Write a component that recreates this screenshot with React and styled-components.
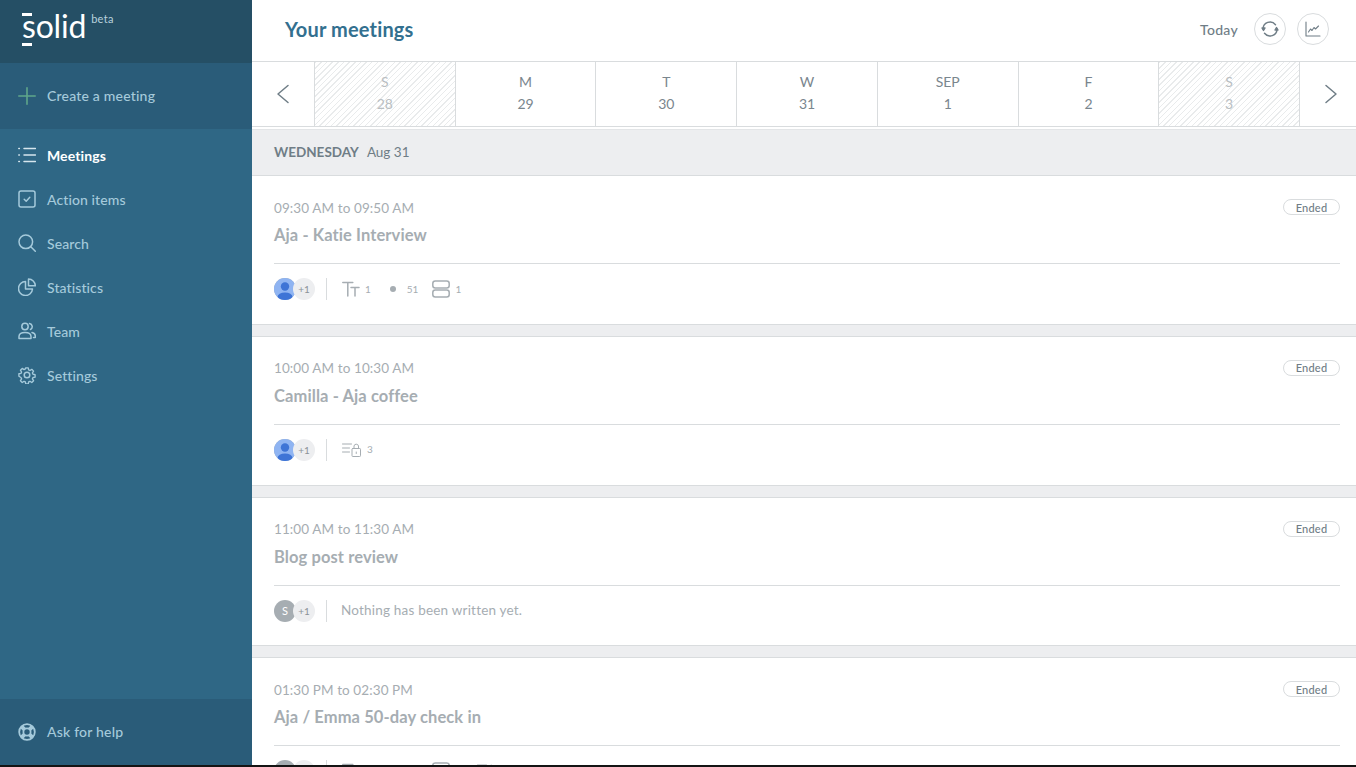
import React from "react";
import styled, { createGlobalStyle } from "styled-components";

const Global = createGlobalStyle`
  html, body { margin: 0; padding: 0; background: #141414; }
  * { box-sizing: border-box; }
  body { font-family: "Lato", "Open Sans", sans-serif; }
`;

const Frame = styled.div`
  display: flex;
  width: 1356px;
  height: 765px;
  overflow: hidden;
  background: #fff;
`;

const Sidebar = styled.aside`
  width: 252px;
  flex-shrink: 0;
  display: flex;
  flex-direction: column;
  background: #2f6785;
`;

const LogoBar = styled.div`
  height: 63px;
  background: #254f65;
  display: flex;
  align-items: flex-start;
  padding: 6px 0 0 22px;
  color: #fff;
`;

const LogoWord = styled.span`
  font-size: 32px;
  font-weight: 400;
  line-height: 40px;
  letter-spacing: -0.2px;
  position: relative;
  &::before, &::after {
    content: "";
    position: absolute;
    left: 0;
    width: 10px;
    height: 3px;
    background: #fff;
  }
  &::before { top: 7px; }
  &::after { top: 37px; }
`;

const Beta = styled.span`
  font-size: 11px;
  color: #b9d2de;
  margin: 6px 0 0 5px;
  letter-spacing: 0.3px;
`;

const CreateBar = styled.div`
  height: 66px;
  background: #2a5c79;
  display: flex;
  align-items: center;
  padding: 0 0 1px 18px;
  gap: 11px;
  color: #a5cadb;
  font-size: 14px;
  font-weight: 500;
  letter-spacing: 0.2px;
`;

const NavList = styled.nav`
  flex: 1;
  padding-top: 4px;
`;

const NavItem = styled.div`
  height: 44px;
  display: flex;
  align-items: center;
  padding-left: 18px;
  gap: 11px;
  font-size: 14px;
  letter-spacing: 0.1px;
  font-weight: ${({ $active }) => ($active ? 700 : 500)};
  color: ${({ $active }) => ($active ? "#fff" : "#a5cadb")};
`;

const Main = styled.main`
  flex: 1;
  min-width: 0;
  display: flex;
  flex-direction: column;
`;

const TopBar = styled.header`
  height: 62px;
  flex-shrink: 0;
  display: flex;
  align-items: center;
  padding: 0 27px 3px 33px;
  border-bottom: 1px solid #d9dcde;
`;

const PageTitle = styled.h1`
  margin: 0;
  flex: 1;
  font-size: 20px;
  font-weight: 700;
  letter-spacing: 0.15px;
  color: #33708f;
`;

const TodayLabel = styled.span`
  font-size: 14px;
  font-weight: 500;
  letter-spacing: 0.3px;
  color: #6f7d86;
  margin-right: 16px;
`;

const RoundButton = styled.button`
  width: 32px;
  height: 32px;
  border-radius: 50%;
  border: 1px solid #d9dcde;
  background: #fff;
  padding: 0;
  margin-left: 11px;
  display: flex;
  align-items: center;
  justify-content: center;
  &:first-of-type { margin-left: 0; }
`;

const Calendar = styled.div`
  height: 65px;
  flex-shrink: 0;
  display: flex;
  border-bottom: 1px solid #d9dcde;
`;

const Arrow = styled.div`
  width: ${({ $w }) => $w}px;
  flex-shrink: 0;
  display: flex;
  align-items: center;
  justify-content: center;
  padding-left: ${({ $shift }) => $shift ?? 0}px;
`;

const Day = styled.div`
  flex: 1;
  display: flex;
  flex-direction: column;
  align-items: center;
  padding-top: 12px;
  gap: 6px;
  font-size: 14px;
  line-height: 16px;
  border-left: 1px solid #d9dcde;
  &:nth-child(8) { border-right: 1px solid #d9dcde; }
  color: ${({ $off }) => ($off ? "#b9bec2" : "#7a868e")};
  background: ${({ $off }) =>
    $off
      ? "repeating-linear-gradient(135deg, #e9ebec 0 1px, #fff 1px 4px)"
      : "#fff"};
`;

const Agenda = styled.div`
  flex: 1;
  min-height: 0;
  margin-top: 2px;
  background: #edeef0;
  border-top: 1px solid #e3e5e7;
`;

const DayHeading = styled.div`
  height: 45px;
  display: flex;
  align-items: center;
  gap: 8px;
  padding: 0 0 1px 22px;
  font-size: 13.5px;
  color: #6f7d86;
  b { font-weight: 700; }
`;

const Card = styled.section`
  height: 149.75px;
  margin-bottom: 11px;
  padding: 0 16px 0 22px;
  background: #fff;
  border-top: 1px solid #d9dcde;
  border-bottom: 1px solid #d9dcde;
`;

const CardTop = styled.div`
  display: flex;
  justify-content: space-between;
  align-items: center;
  padding-top: 23px;
  height: 39px;
`;

const Time = styled.span`
  font-size: 13.5px;
  letter-spacing: 0.1px;
  margin-top: 1px;
  color: #a6adb2;
`;

const Ended = styled.span`
  width: 57px;
  height: 16px;
  border: 1px solid #d9dcde;
  border-radius: 8px;
  display: flex;
  align-items: center;
  justify-content: center;
  font-size: 11px;
  font-weight: 500;
  letter-spacing: 0.2px;
  color: #6f7d86;
`;

const MeetingTitle = styled.h2`
  margin: 0;
  height: 49px;
  padding-top: 9px;
  font-size: 16.5px;
  line-height: 22px;
  letter-spacing: 0.1px;
  font-weight: 700;
  color: #a6adb2;
  border-bottom: 1px solid #d9dcde;
`;

const Meta = styled.div`
  display: flex;
  align-items: center;
  height: 50px;
`;

const Avatars = styled.div`
  display: flex;
  padding-right: 11px;
  margin-right: 15px;
  width: 53px;
  position: relative;
  &::after {
    content: "";
    position: absolute;
    right: 0;
    top: 0;
    width: 1px;
    height: 22px;
    background: #d9dcde;
  }
`;

const Avatar = styled.span`
  width: 22px;
  height: 22px;
  flex-shrink: 0;
  border-radius: 50%;
  overflow: hidden;
  display: flex;
  align-items: center;
  justify-content: center;
  font-size: 11px;
  color: #fff;
  background: #a6adb2;
`;

const PlusOne = styled.span`
  width: 22px;
  height: 22px;
  flex-shrink: 0;
  margin-left: -3px;
  border-radius: 50%;
  display: flex;
  align-items: center;
  justify-content: center;
  font-size: 10px;
  color: #8b9399;
  background: #edeef0;
`;

const Stat = styled.span`
  display: flex;
  align-items: center;
  gap: ${({ $inner }) => $inner ?? 5}px;
  margin-right: ${({ $gap }) => $gap ?? 0}px;
  padding-bottom: 1px;
  font-size: 10px;
  color: #a6adb2;
`;

const Empty = styled.span`
  font-size: 13.5px;
  letter-spacing: 0.2px;
  margin-left: -1px;
  padding-bottom: 2px;
  color: #a6adb2;
`;

const Svg = ({ size = 20, h, color = "#a5cadb", sw = 1.5, children }) => (
  <svg width={size} height={h ?? size} viewBox={`0 0 ${size} ${h ?? size}`} fill="none" stroke={color} strokeWidth={sw} strokeLinecap="round" strokeLinejoin="round">
    {children}
  </svg>
);

const PlusIcon = () => (
  <Svg size={18} color="#5fa68a" sw={1.6}>
    <path d="M9 .8v16.400M.8 9h16.400" />
  </Svg>
);
const ListIcon = () => (
  <Svg h={18} size={18} color="#d6e6ee">
    <path d="M6 2.500h11.500M6 9h11.500M6 15.500h11.500M.8 2.500h.6M.8 9h.6M.8 15.500h.6" />
  </Svg>
);
const CheckIcon = () => (
  <Svg size={18}>
    <rect x="1" y="1" width="16" height="16" rx="2" />
    <path d="M6.200 9.300l2 2 3.600-4" />
  </Svg>
);
const SearchIcon = () => (
  <Svg size={18}>
    <circle cx="7.800" cy="7.800" r="6.800" />
    <path d="M12.800 12.800l4.500 4.500" />
  </Svg>
);
const PieIcon = () => (
  <Svg size={18}>
    <path d="M7.500 3.500a7 7 0 1 0 7 7.500H7.500z" />
    <path d="M10.500 1v6.800h6.800A7 7 0 0 0 10.500 1z" />
  </Svg>
);
const TeamIcon = () => (
  <Svg size={18}>
    <circle cx="7" cy="4.500" r="3.200" />
    <path d="M1 16.500v-2c0-2.500 2.500-4 6-4s6 1.500 6 4v2z" />
    <path d="M11.500 1.500a3.200 3.200 0 0 1 1 6M14 10.500c2 .5 3.300 1.800 3.300 3.500v1.500h-1.800" />
  </Svg>
);
const GearIcon = () => (
  <Svg size={18}>
    <circle cx="9" cy="9" r="2.800" />
    <path d="M7.600 1h2.800l.4 2.300 1.500.7 2-1.300 2 2-1.300 2 .7 1.500 2.300.4v2.800l-2.300.4-.7 1.500 1.300 2-2 2-2-1.300-1.500.7-.4 2.300H7.600l-.4-2.300-1.500-.7-2 1.300-2-2 1.300-2-.7-1.500L0 10.400V7.600l2.300-.4.7-1.500-1.300-2 2-2 2 1.300 1.500-.7z" transform="translate(.9 .9) scale(.9)" />
  </Svg>
);
const HelpIcon = () => (
  <Svg size={18} sw={1.8}>
    <circle cx="9" cy="9" r="7.800" />
    <circle cx="9" cy="9" r="3.600" />
    <path d="M3.500 3.500L6.600 6.600M14.500 3.500L11.400 6.600M3.500 14.500L6.600 11.400M14.500 14.500L11.400 11.400" strokeWidth="4" strokeLinecap="butt" />
  </Svg>
);
const ChevronLeft = () => (
  <Svg size={14} h={20} color="#6f7d86" sw={1.5}>
    <path d="M12 1.500L2 10l10 8.500" />
  </Svg>
);
const ChevronRight = () => (
  <Svg size={14} h={20} color="#6f7d86" sw={1.5}>
    <path d="M2 1.500L12 10 2 18.500" />
  </Svg>
);
const SyncIcon = () => (
  <Svg size={18} color="#6f7d86" sw={1.4}>
    <path d="M2 9a7 7 0 0 1 12.500-4.300M16 9a7 7 0 0 1-12.500 4.300" />
    <path d="M1 8h3l-1.500 2.500zM17 10h-3l1.500-2.500z" fill="#6f7d86" />
  </Svg>
);
const ChartIcon = () => (
  <Svg size={16} color="#6f7d86" sw={1.1}>
    <path d="M1 1v14h14" />
    <path d="M3.500 11l2-3 1.500 1.500 2-3 1.500 1.500 3-3" />
  </Svg>
);
const TextSizeIcon = () => (
  <Svg size={18} h={16} color="#a6adb2" sw={1.5}>
    <path d="M.8 1.500h10M5.800 1.500V15M9 6.500h8M13 6.500V15" />
  </Svg>
);
const Dot = () => (
  <svg width="6" height="6" viewBox="0 0 6 6"><circle cx="3" cy="3" r="3" fill="#a6adb2" /></svg>
);
const StackIcon = () => (
  <Svg size={18} color="#a6adb2" sw={1.5}>
    <rect x=".8" y="1" width="16.400" height="7" rx="2.500" />
    <rect x=".8" y="10" width="16.400" height="7" rx="2.500" />
  </Svg>
);
const PrivateNoteIcon = () => (
  <Svg size={20} h={15} color="#a6adb2" sw={1}>
    <path d="M.5 2h9M.5 6h7M.5 10h7" />
    <rect x="10" y="6.500" width="8.500" height="8" rx=".8" />
    <path d="M12 6.500V4a2.300 2.300 0 0 1 4.500 0v2.500M14.250 10v1.500" />
  </Svg>
);
const UserPhoto = () => (
  <svg width="22" height="22" viewBox="0 0 22 22">
    <rect width="22" height="22" fill="#8fb4f2" />
    <circle cx="11" cy="8.500" r="4.200" fill="#3e74d6" />
    <ellipse cx="11" cy="19" rx="7.500" ry="4.500" fill="#3e74d6" />
  </svg>
);

const days = [
  { l: "S", n: 28, off: true },
  { l: "M", n: 29 },
  { l: "T", n: 30 },
  { l: "W", n: 31 },
  { l: "SEP", n: 1 },
  { l: "F", n: 2 },
  { l: "S", n: 3, off: true },
];

const nav = [
  ["Meetings", ListIcon, true],
  ["Action items", CheckIcon],
  ["Search", SearchIcon],
  ["Statistics", PieIcon],
  ["Team", TeamIcon],
  ["Settings", GearIcon],
];

const FullStats = ({ more }) => (
  <>
    <Stat $gap={19}><TextSizeIcon />1</Stat>
    <Stat $gap={14} $inner={11}><Dot />51</Stat>
    <Stat $gap={16}><StackIcon />1</Stat>
    {more && <Stat><PrivateNoteIcon />1</Stat>}
  </>
);

const meetings = [
  { time: "09:30 AM to 09:50 AM", title: "Aja - Katie Interview", photo: true, body: <FullStats /> },
  { time: "10:00 AM to 10:30 AM", title: "Camilla - Aja coffee", photo: true, body: <Stat><PrivateNoteIcon />3</Stat> },
  { time: "11:00 AM to 11:30 AM", title: "Blog post review", body: <Empty>Nothing has been written yet.</Empty> },
  { time: "01:30 PM to 02:30 PM", title: "Aja / Emma 50-day check in", body: <FullStats more /> },
];

export default function App() {
  return (
    <>
      <Global />
      <Frame>
        <Sidebar>
          <LogoBar>
            <LogoWord>solid</LogoWord>
            <Beta>beta</Beta>
          </LogoBar>
          <CreateBar><PlusIcon />Create a meeting</CreateBar>
          <NavList>
            {nav.map(([label, Icon, active]) => (
              <NavItem key={label} $active={active}><Icon />{label}</NavItem>
            ))}
          </NavList>
          <CreateBar><HelpIcon />Ask for help</CreateBar>
        </Sidebar>
        <Main>
          <TopBar>
            <PageTitle>Your meetings</PageTitle>
            <TodayLabel>Today</TodayLabel>
            <RoundButton><SyncIcon /></RoundButton>
            <RoundButton><ChartIcon /></RoundButton>
          </TopBar>
          <Calendar>
            <Arrow $w={62}><ChevronLeft /></Arrow>
            {days.map((d, i) => (
              <Day key={i} $off={d.off}><span>{d.l}</span><span>{d.n}</span></Day>
            ))}
            <Arrow $w={56} $shift={6}><ChevronRight /></Arrow>
          </Calendar>
          <Agenda>
            <DayHeading><b>WEDNESDAY</b> Aug 31</DayHeading>
            {meetings.map((m) => (
              <Card key={m.time}>
                <CardTop><Time>{m.time}</Time><Ended>Ended</Ended></CardTop>
                <MeetingTitle>{m.title}</MeetingTitle>
                <Meta>
                  <Avatars>
                    <Avatar>{m.photo ? <UserPhoto /> : "S"}</Avatar>
                    <PlusOne>+1</PlusOne>
                  </Avatars>
                  {m.body}
                </Meta>
              </Card>
            ))}
          </Agenda>
        </Main>
      </Frame>
    </>
  );
}
